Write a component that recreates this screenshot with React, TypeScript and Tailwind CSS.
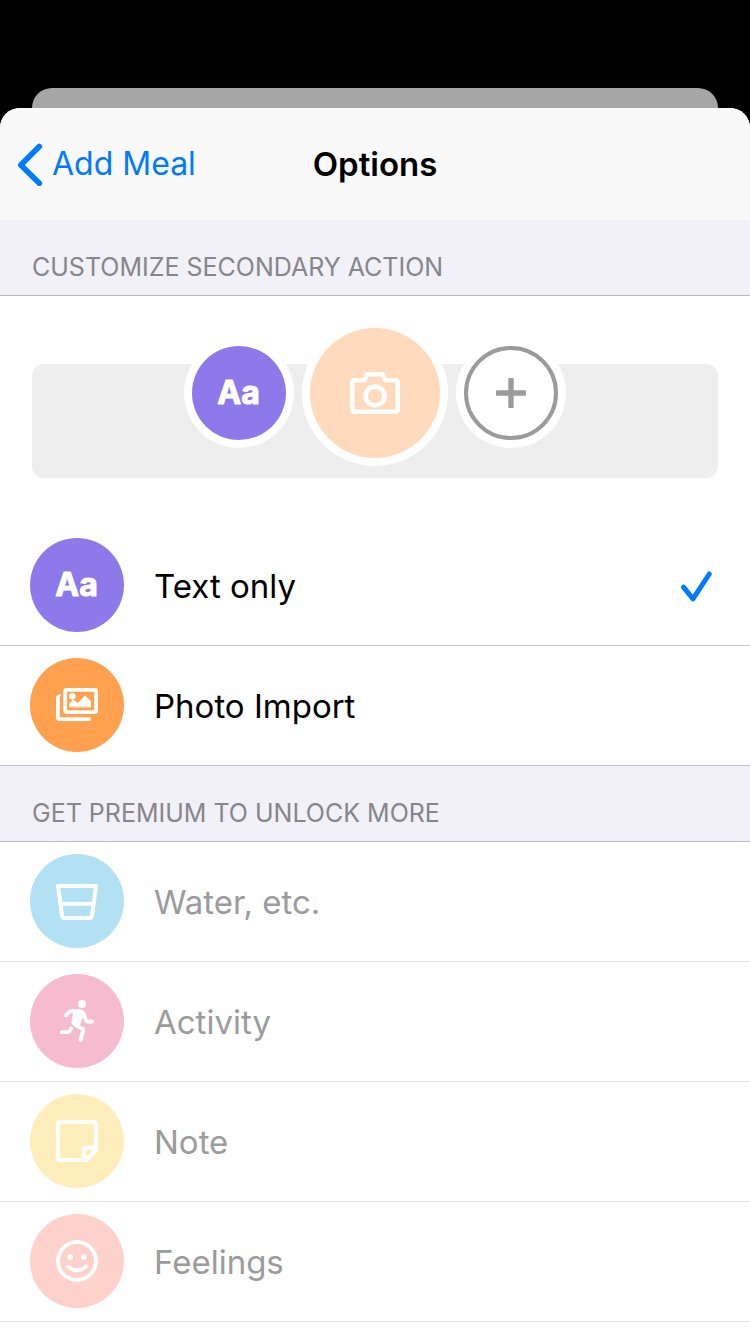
import { useState } from "react";
import type { ReactNode } from "react";

function TextIcon() {
  return (
    <svg viewBox="0 0 94 94" className="size-full" aria-hidden="true">
      <text
        x="46.5"
        y="57.6"
        textAnchor="middle"
        fill="#fff"
        stroke="#fff"
        strokeWidth="1"
        strokeLinejoin="round"
        className="font-['Inter',sans-serif] text-[32px] font-bold"
      >
        Aa
      </text>
    </svg>
  );
}

function IconFrame({ children }: { children: ReactNode }) {
  return (
    <svg
      viewBox="0 0 94 94"
      className="size-full"
      fill="none"
      stroke="#fff"
      strokeWidth="4"
      strokeLinecap="round"
      strokeLinejoin="round"
      aria-hidden="true"
    >
      {children}
    </svg>
  );
}

function PhotosIcon() {
  return (
    <IconFrame>
      <rect x="35.2" y="31.9" width="30.9" height="22.2" rx="1.5" strokeWidth="3.8" />
      <path d="M27.9 39.3V59.2a2 2 0 0 0 2 2H59" strokeWidth="3.8" />
      <path d="M28 39.2Q28 37.8 30 37.2" strokeWidth="2.5" />
      <circle cx="42.3" cy="38.2" r="3.2" fill="#fff" stroke="none" />
      <path
        d="M39.8 48.5V45.4L43.4 42L47.7 45.6L55.2 38L60.6 43.3V48.5Z"
        fill="#fff"
        strokeWidth="1"
      />
    </IconFrame>
  );
}

function WaterIcon() {
  return (
    <IconFrame>
      <path d="M28 32H66L62 61.8a2.5 2.5 0 0 1-2.5 2.2H34.5a2.5 2.5 0 0 1-2.5-2.2Z" />
      <path d="M31.5 49.8H62.5" strokeLinecap="butt" />
    </IconFrame>
  );
}

function ActivityIcon() {
  return (
    <IconFrame>
      <circle cx="52" cy="30" r="4.1" fill="#fff" stroke="none" />
      <path
        d="M35.8 41.3L39.6 37.7Q41 36.6 43 36.9L50 37.2Q52.6 37.6 53.5 39.8L55.6 45.2Q56.2 47.4 58.2 47.5H62.2"
        strokeWidth="3.8"
      />
      <path d="M44.5 38.5L52.3 39.5L48.8 50.3L44.5 51L43 48.5Z" fill="#fff" strokeWidth="3" />
      <path d="M44.6 49.8Q46 52 52.3 54.6Q53.5 55.4 53.1 57L50.5 65.9" />
      <path d="M41.2 54.3L39.6 57Q38.8 58.2 37.2 58.2H31.8" strokeWidth="3.8" />
    </IconFrame>
  );
}

function NoteIcon() {
  return (
    <IconFrame>
      <path
        d="M30 28H64a2 2 0 0 1 2 2V56L56.5 66H30a2 2 0 0 1-2-2V30a2 2 0 0 1 2-2Z"
        strokeWidth="4.2"
      />
      <path d="M53.7 65V53.7H65" strokeWidth="4" strokeLinecap="butt" />
    </IconFrame>
  );
}

function FeelingsIcon() {
  return (
    <IconFrame>
      <circle cx="47" cy="47" r="19" />
      <circle cx="40.3" cy="43" r="2.8" fill="#fff" stroke="none" />
      <circle cx="53.7" cy="43" r="2.8" fill="#fff" stroke="none" />
      <path d="M38 52.6Q47 60 56 52.6" strokeWidth="3.8" />
    </IconFrame>
  );
}

function CameraIcon() {
  return (
    <svg
      viewBox="0 0 130 130"
      className="size-full"
      fill="none"
      stroke="#fff"
      strokeWidth="4.6"
      strokeLinejoin="round"
      aria-hidden="true"
    >
      <path d="M44.3 52.2H54.5L57.4 46.3H72.6L75.5 52.2H85.7a2 2 0 0 1 2 2V81.7a2 2 0 0 1-2 2H44.3a2 2 0 0 1-2-2V54.2a2 2 0 0 1 2-2Z" />
      <circle cx="65" cy="68" r="9.4" strokeWidth="4.8" />
    </svg>
  );
}

function SectionHeader({ children }: { children: ReactNode }) {
  return (
    <h2 className="flex h-[76px] items-end border-b border-[#bcbbc1] bg-[#f2f1f7] px-8 pb-3 text-[25px] leading-8 text-[#86868b]">
      {children}
    </h2>
  );
}

const choices = [
  { id: "text", label: "Text only", color: "bg-[#8e79ea]", icon: <TextIcon /> },
  { id: "photo", label: "Photo Import", color: "bg-[#ffa14f]", icon: <PhotosIcon /> },
];

const premium = [
  { label: "Water, etc.", color: "bg-[#b1e1f3]", icon: <WaterIcon /> },
  { label: "Activity", color: "bg-[#f7bbd0]", icon: <ActivityIcon /> },
  { label: "Note", color: "bg-[#ffeebb]", icon: <NoteIcon /> },
  { label: "Feelings", color: "bg-[#ffd1cb]", icon: <FeelingsIcon /> },
];

export default function App() {
  const [selected, setSelected] = useState("text");
  const current = choices.find((c) => c.id === selected) ?? choices[0];

  return (
    <div className="flex min-h-screen flex-col bg-black pt-[88px] font-['Inter','Liberation_Sans',sans-serif] text-black">
      <div className="mx-8 h-5 rounded-t-[20px] bg-[#a6a6a6]" />
      <div className="flex-1 overflow-hidden rounded-t-[20px] bg-white">
        <header className="grid h-28 grid-cols-[1fr_auto_1fr] items-center bg-[#f9f9f9] px-4">
          <a href="#add-meal" className="flex items-center gap-2 text-[32px] leading-10 text-[#007aff]">
            <svg
              viewBox="0 0 28 44"
              className="h-11 w-7"
              fill="none"
              stroke="currentColor"
              strokeWidth="5.6"
              strokeLinecap="round"
              strokeLinejoin="round"
              aria-hidden="true"
            >
              <path d="M23.3 4.5L4.8 23L23.3 41.3" />
            </svg>
            Add Meal
          </a>
          <h1 className="text-[33px] leading-10 font-semibold">Options</h1>
        </header>

        <main>
          <SectionHeader>CUSTOMIZE SECONDARY ACTION</SectionHeader>
          <div className="px-8 pt-[68px] pb-12">
            <div className="flex h-[114px] items-start justify-center rounded-xl bg-[#eeeeee]">
              <div className="-mt-11 flex items-center gap-2">
                <div className="rounded-full bg-white p-2">
                  <div className={`size-[94px] rounded-full ${current.color}`}>{current.icon}</div>
                </div>
                <div className="rounded-full bg-white p-2">
                  <div className="size-[130px] rounded-full bg-[#ffdabd]">
                    <CameraIcon />
                  </div>
                </div>
                <div className="rounded-full bg-white p-2">
                  <div className="flex size-[94px] items-center justify-center rounded-full border-4 border-[#9b9b9b]">
                    <svg viewBox="0 0 30 30" className="size-[30px]" fill="#9b9b9b" aria-hidden="true">
                      <rect x="0" y="12.3" width="30" height="5.4" rx="1" />
                      <rect x="12.3" y="0" width="5.4" height="30" rx="1" />
                    </svg>
                  </div>
                </div>
              </div>
            </div>
          </div>

          <div role="radiogroup" aria-label="Secondary action">
            {choices.map((c) => (
              <label
                key={c.id}
                className="relative flex h-[120px] cursor-pointer items-center gap-[30px] border-b border-[#c7c7c9] pr-[38px] pl-[30px]"
              >
                <input
                  type="radio"
                  name="secondary-action"
                  className="sr-only"
                  checked={selected === c.id}
                  onChange={() => setSelected(c.id)}
                />
                <span className={`mt-3 size-[94px] shrink-0 self-start rounded-full ${c.color}`}>{c.icon}</span>
                <span className="flex-1 text-[33px] leading-10">{c.label}</span>
                {selected === c.id && (
                  <svg
                    viewBox="0 0 32 32"
                    className="size-8"
                    fill="none"
                    stroke="#007aff"
                    strokeWidth="5"
                    strokeLinecap="round"
                    strokeLinejoin="round"
                    aria-hidden="true"
                  >
                    <path d="M3.5 17.2L13 28.8L29.3 4" />
                  </svg>
                )}
              </label>
            ))}
          </div>

          <SectionHeader>GET PREMIUM TO UNLOCK MORE</SectionHeader>
          {premium.map((p) => (
            <button
              key={p.label}
              type="button"
              disabled
              className="flex h-[120px] w-full items-center gap-[30px] border-b border-[#e8e8e9] pr-[38px] pl-[30px] text-left text-[33px] leading-10 text-[#9b9b9b]"
            >
              <span className={`mt-3 size-[94px] shrink-0 self-start rounded-full ${p.color}`}>{p.icon}</span>
              {p.label}
            </button>
          ))}
        </main>
      </div>
    </div>
  );
}
